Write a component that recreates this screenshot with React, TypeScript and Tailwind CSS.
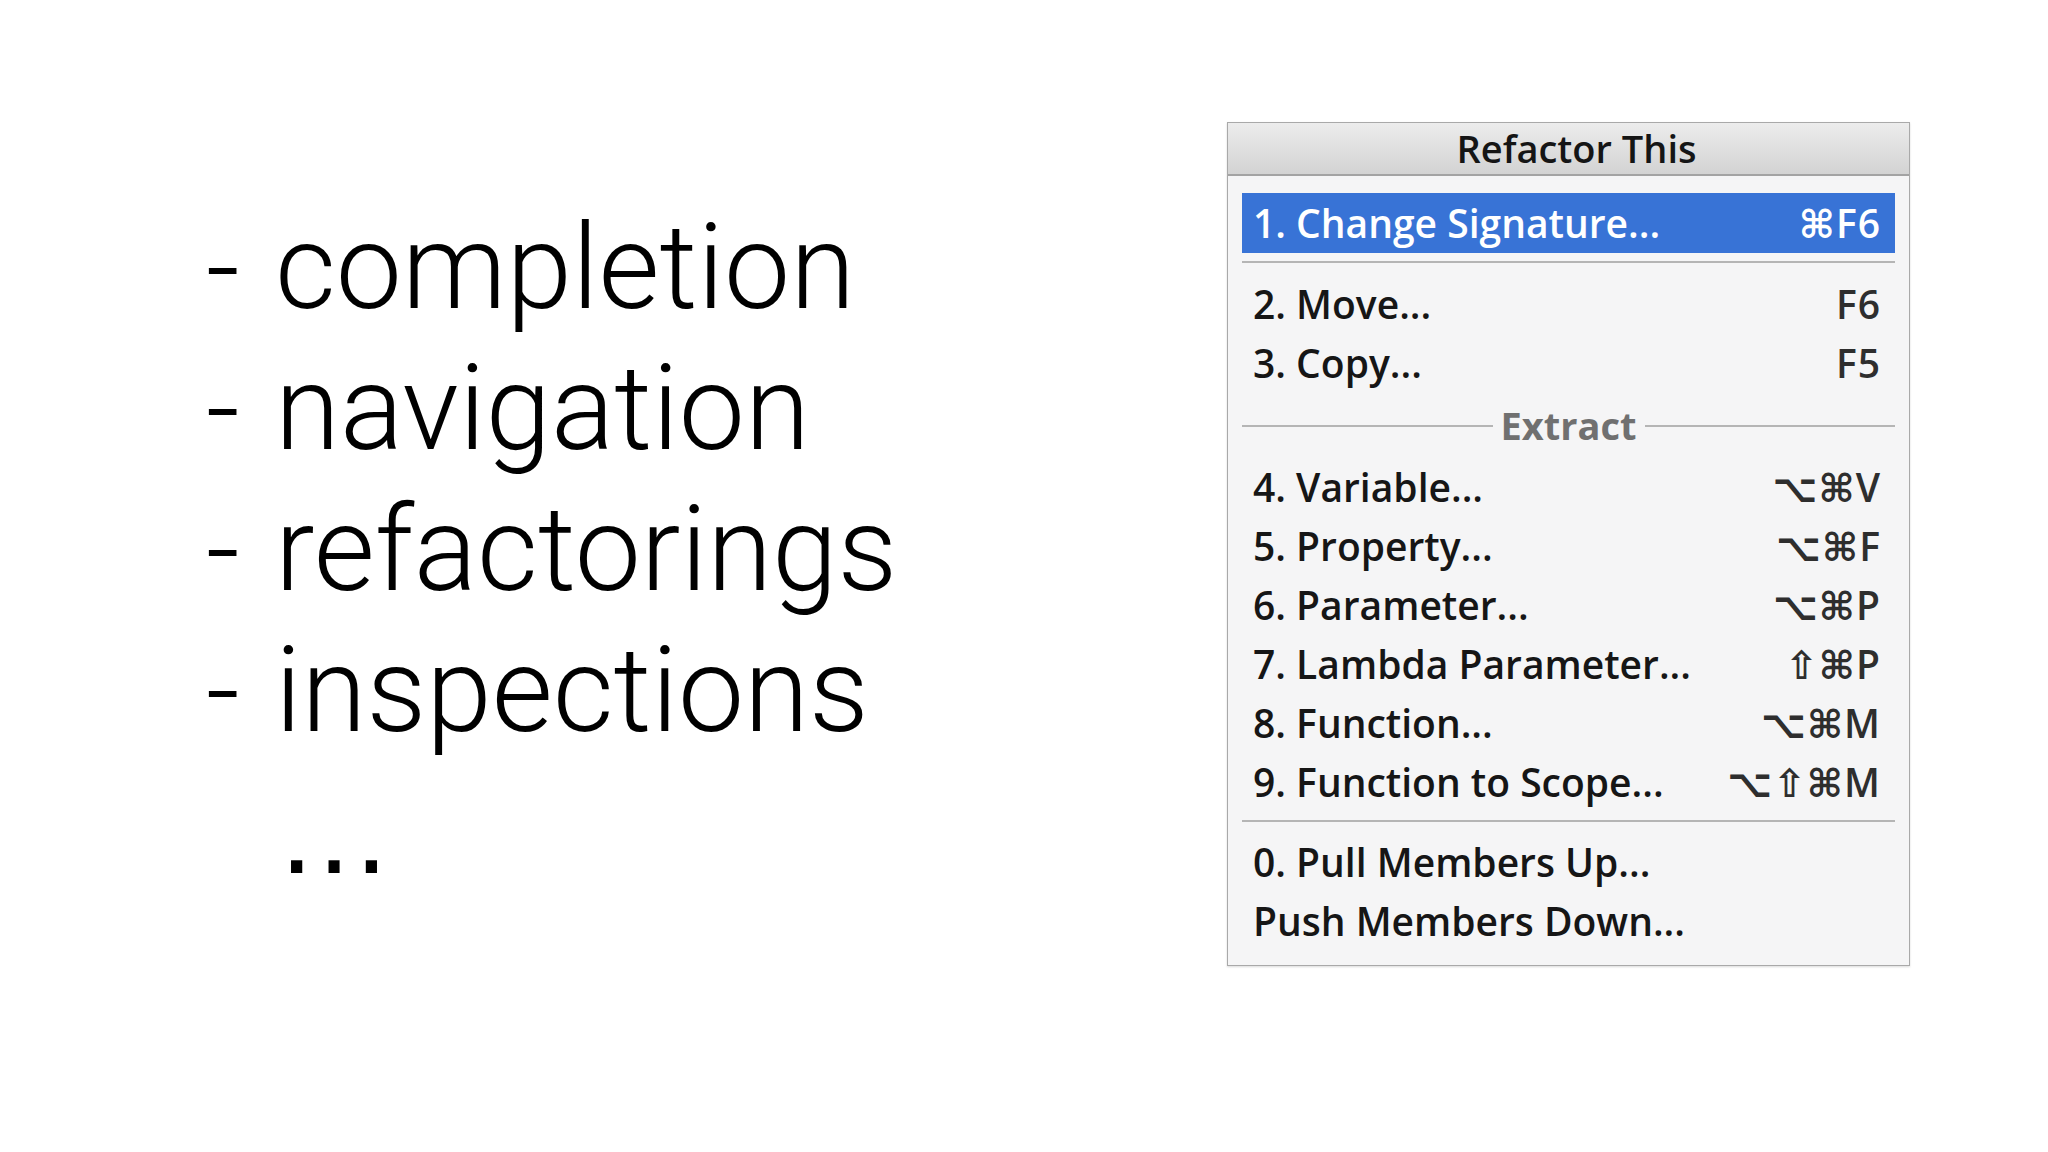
import React from 'react';

type Item = { label: string; keys?: string };

const topItems: Item[] = [
  { label: '2. Move...', keys: 'F6' },
  { label: '3. Copy...', keys: 'F5' },
];

const extractItems: Item[] = [
  { label: '4. Variable...', keys: '⌥⌘V' },
  { label: '5. Property...', keys: '⌥⌘F' },
  { label: '6. Parameter...', keys: '⌥⌘P' },
  { label: '7. Lambda Parameter...', keys: '⇧⌘P' },
  { label: '8. Function...', keys: '⌥⌘M' },
  { label: '9. Function to Scope...', keys: '⌥⇧⌘M' },
];

const bottomItems: Item[] = [
  { label: '0. Pull Members Up...' },
  { label: 'Push Members Down...' },
];

const bullets = ['completion', 'navigation', 'refactorings', 'inspections'];

const MenuRow: React.FC<Item & { active?: boolean }> = ({ label, keys, active }) => (
  <div
    className={`flex items-center justify-between pl-[11px] pr-[14px] ${
      active ? 'h-[60px] bg-[#3873d6] text-white' : 'h-[59px] text-[#161616]'
    }`}
  >
    <span>{label}</span>
    {keys && <span className={`tracking-[1px] ${active ? '' : 'text-[#2e2e2e]'}`}>{keys}</span>}
  </div>
);

const Separator = () => <div className="h-[2px] bg-[#b5b5b5]" />;

export default function App() {
  return (
    <div className="w-[2048px] h-[1152px] bg-white flex items-start pl-[206px] pt-[122px] overflow-hidden">
      {/* Slide bullets */}
      <div
        className="w-[1021px] mt-[76px] text-[118px] leading-[141px] font-light text-black"
        style={{ fontFamily: 'Roboto, "Liberation Sans", Arial, sans-serif' }}
      >
        {bullets.map((b) => (
          <div key={b} className="flex whitespace-pre">
            <span className="w-[69px] shrink-0">-</span>
            <span>{b}</span>
          </div>
        ))}
        <div
          className="pl-[69px] font-normal"
          style={{ fontFamily: '"Liberation Sans", Arial, sans-serif' }}
        >
          …
        </div>
      </div>

      {/* Refactor This popup */}
      <div
        className="w-[683px] h-[844px] flex flex-col border border-[#a9a9a9] bg-[#f5f5f6] text-[39px] font-semibold shadow-[0_1px_2px_rgba(0,0,0,0.15)]"
        style={{ fontFamily: '"Open Sans", "DejaVu Sans", sans-serif' }}
      >
        <div className="h-[53px] shrink-0 flex items-center justify-center pl-[16px] border-b-2 border-[#a3a3a3] bg-gradient-to-b from-[#ececec] to-[#d3d3d3] text-[38px] text-[#151515]">
          Refactor This
        </div>

        <div className="flex flex-col px-[14px] pt-[17px]">
          <MenuRow label="1. Change Signature..." keys="⌘F6" active />
          <div className="h-[8px]" />
          <Separator />
          <div className="h-[12px]" />
          {topItems.map((it) => (
            <MenuRow key={it.label} {...it} />
          ))}

          <div className="h-[65px] flex items-center gap-[8px] text-[#707070] font-bold">
            <div className="flex-1 h-[2px] bg-[#b5b5b5]" />
            <span className="text-[38px]">Extract</span>
            <div className="flex-1 h-[2px] bg-[#b5b5b5]" />
          </div>

          {extractItems.map((it) => (
            <MenuRow key={it.label} {...it} />
          ))}
          <div className="h-[8px]" />
          <Separator />
          <div className="h-[11px]" />
          {bottomItems.map((it) => (
            <MenuRow key={it.label} {...it} />
          ))}
        </div>
      </div>
    </div>
  );
}
